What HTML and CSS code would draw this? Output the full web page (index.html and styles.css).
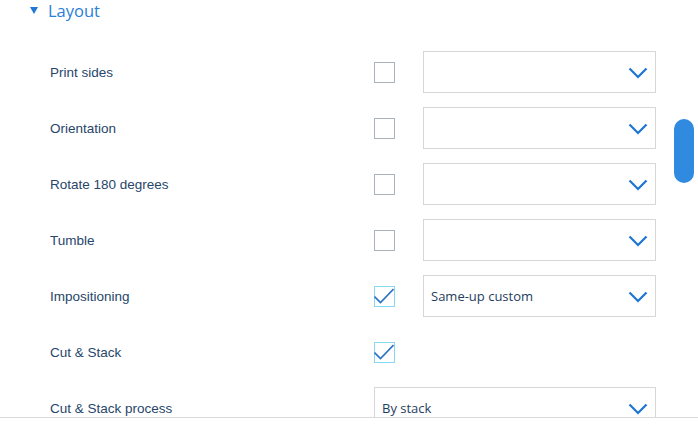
FILE: index.html
```html
<!DOCTYPE html>
<html>
<head>
<meta charset="utf-8">
<link rel="stylesheet" href="styles.css">
</head>
<body>
<div class="panel">
  <div class="section-head">
    <span class="caret"></span>
    <span class="section-title">Layout</span>
  </div>
  <div class="rows">
    <div class="row">
      <span class="label">Print sides</span>
      <span class="cb"></span>
      <div class="select"><span class="val"></span><svg class="chev" width="20" height="12" viewBox="0 0 20 12"><path d="M1.5 1.5 L10 10 L18.5 1.5" fill="none" stroke="#1c74d4" stroke-width="2.2"/></svg></div>
    </div>
    <div class="row">
      <span class="label">Orientation</span>
      <span class="cb"></span>
      <div class="select"><span class="val"></span><svg class="chev" width="20" height="12" viewBox="0 0 20 12"><path d="M1.5 1.5 L10 10 L18.5 1.5" fill="none" stroke="#1c74d4" stroke-width="2.2"/></svg></div>
    </div>
    <div class="row">
      <span class="label">Rotate 180 degrees</span>
      <span class="cb"></span>
      <div class="select"><span class="val"></span><svg class="chev" width="20" height="12" viewBox="0 0 20 12"><path d="M1.5 1.5 L10 10 L18.5 1.5" fill="none" stroke="#1c74d4" stroke-width="2.2"/></svg></div>
    </div>
    <div class="row">
      <span class="label">Tumble</span>
      <span class="cb"></span>
      <div class="select"><span class="val"></span><svg class="chev" width="20" height="12" viewBox="0 0 20 12"><path d="M1.5 1.5 L10 10 L18.5 1.5" fill="none" stroke="#1c74d4" stroke-width="2.2"/></svg></div>
    </div>
    <div class="row">
      <span class="label">Impositioning</span>
      <span class="cb checked"><svg width="20" height="20" viewBox="0 0 20 20"><path d="M0.5 10.5 L6.5 16.5 L19.5 3" fill="none" stroke="#2a72c8" stroke-width="1.6"/></svg></span>
      <div class="select"><span class="val">Same-up custom</span><svg class="chev" width="20" height="12" viewBox="0 0 20 12"><path d="M1.5 1.5 L10 10 L18.5 1.5" fill="none" stroke="#1c74d4" stroke-width="2.2"/></svg></div>
    </div>
    <div class="row">
      <span class="label">Cut &amp; Stack</span>
      <span class="cb checked"><svg width="20" height="20" viewBox="0 0 20 20"><path d="M0.5 10.5 L6.5 16.5 L19.5 3" fill="none" stroke="#2a72c8" stroke-width="1.6"/></svg></span>
    </div>
    <div class="row">
      <span class="label">Cut &amp; Stack process</span>
      <div class="select wide"><span class="val">By stack</span><svg class="chev" width="20" height="12" viewBox="0 0 20 12"><path d="M1.5 1.5 L10 10 L18.5 1.5" fill="none" stroke="#1c74d4" stroke-width="2.2"/></svg></div>
    </div>
  </div>
  <div class="thumb"></div>
</div>
</body>
</html>
```

FILE: styles.css
```css
html, body {
  margin: 0;
  padding: 0;
  background: #fff;
}
.panel {
  position: relative;
  height: 417px;
  overflow: hidden;
  border-bottom: 1px solid #d9d9d9;
}
.section-head {
  display: flex;
  align-items: center;
  height: 22px;
  padding-left: 30px;
  margin-bottom: 22px;
}
.caret {
  width: 0;
  height: 0;
  border-left: 4.5px solid transparent;
  border-right: 4.5px solid transparent;
  border-top: 7px solid #1f78d3;
  margin-right: 10px;
  margin-top: -2px;
}
.section-title {
  font-family: "Open Sans", sans-serif;
  font-size: 16.5px;
  color: #2a80d6;
  line-height: 22px;
}
.rows {
  display: flex;
  flex-direction: column;
}
.row {
  display: flex;
  align-items: center;
  height: 56px;
  padding-left: 50px;
}
.label {
  width: 324px;
  font-family: "Liberation Sans", Arial, sans-serif;
  font-size: 13.5px;
  color: #27466a;
}
.cb {
  width: 19px;
  height: 19px;
  border: 1px solid #a9b2b8;
  box-sizing: content-box;
  margin-right: 28px;
  display: flex;
}
.cb.checked {
  border-color: #86d9ef;
  overflow: visible;
}
.cb svg {
  display: block;
  margin: -1px 0 0 -1px;
}
.select {
  height: 40px;
  border: 1px solid #d6d6d6;
  display: flex;
  align-items: center;
  justify-content: space-between;
  padding: 0 7px 0 7px;
  box-sizing: content-box;
  width: 217px;
}
.select.wide {
  width: 266px;
}
.val {
  font-family: "Open Sans", sans-serif;
  font-size: 13px;
  color: #1f3d5e;
}
.chev {
  display: block;
  margin-top: 2px;
}
.thumb {
  position: absolute;
  left: 674px;
  top: 119px;
  width: 20px;
  height: 64px;
  border-radius: 10px;
  background: #2f8ae0;
}
```
